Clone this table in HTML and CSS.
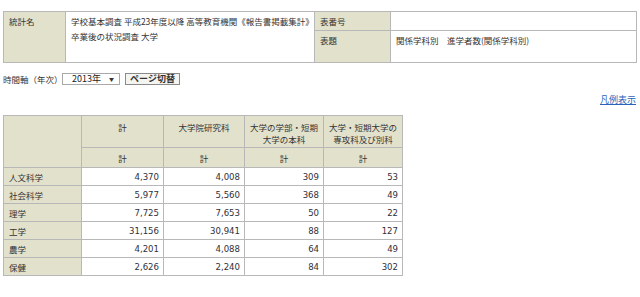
FILE: index.html
```html
<!DOCTYPE html>
<html lang="ja">
<head>
<meta charset="utf-8">
<title>統計表</title>
<link rel="stylesheet" href="styles.css">
</head>
<body>
<div class="page">
  <table class="info">
    <colgroup>
      <col class="c-lab1"><col class="c-val1"><col class="c-lab2"><col class="c-val2">
    </colgroup>
    <tr class="r1">
      <th rowspan="2">統計名</th>
      <td rowspan="2" class="nw">学校基本調査 平成23年度以降 高等教育機関《報告書掲載集計》<br>卒業後の状況調査 大学</td>
      <th>表番号</th>
      <td></td>
    </tr>
    <tr class="r2">
      <th>表題</th>
      <td>関係学科別　進学者数(関係学科別)</td>
    </tr>
  </table>

  <div class="axis">
    <span class="axis-label">時間軸（年次）</span>
    <span class="select-wrap">
      <select class="select"><option>2013年</option></select>
      <span class="arrow">▼</span>
    </span>
    <button class="btn" type="button">ページ切替</button>
  </div>

  <div class="legend"><a href="#">凡例表示</a></div>

  <table class="data">
    <colgroup>
      <col class="d0"><col class="d1"><col class="d2"><col class="d3"><col class="d4">
    </colgroup>
    <tr class="h1">
      <th rowspan="2" class="corner"></th>
      <th>計</th>
      <th>大学院研究科</th>
      <th>大学の学部・短期<br>大学の本科</th>
      <th>大学・短期大学の<br>専攻科及び別科</th>
    </tr>
    <tr class="h2">
      <th>計</th><th>計</th><th>計</th><th>計</th>
    </tr>
    <tr class="row"><th class="rl">人文科学</th><td>4,370</td><td>4,008</td><td>309</td><td>53</td></tr>
    <tr class="row"><th class="rl">社会科学</th><td>5,977</td><td>5,560</td><td>368</td><td>49</td></tr>
    <tr class="row"><th class="rl">理学</th><td>7,725</td><td>7,653</td><td>50</td><td>22</td></tr>
    <tr class="row"><th class="rl">工学</th><td>31,156</td><td>30,941</td><td>88</td><td>127</td></tr>
    <tr class="row"><th class="rl">農学</th><td>4,201</td><td>4,088</td><td>64</td><td>49</td></tr>
    <tr class="row"><th class="rl">保健</th><td>2,626</td><td>2,240</td><td>84</td><td>302</td></tr>
  </table>
</div>
</body>
</html>
```

FILE: styles.css
```css
html, body {
  margin: 0;
  padding: 0;
  background: #ffffff;
}
body {
  font-family: "Noto Sans CJK JP", sans-serif;
  font-size: 8.5px;
  color: #333333;
}
.page {
  padding: 11px 4px 0 3px;
  width: 633px;
}
table {
  border-collapse: collapse;
  table-layout: fixed;
}
.info {
  width: 633px;
}
.info th, .info td {
  border: 1px solid #b8b8b8;
  font-weight: normal;
  text-align: left;
  vertical-align: top;
  padding: 2px 5px 0 5px;
  line-height: 15px;
}
.info th {
  background: #e2e1cb;
}
.info td {
  background: #ffffff;
}
.info td.nw {
  white-space: nowrap;
  overflow: hidden;
  padding-right: 0;
}
.c-lab1 { width: 62px; }
.c-val1 { width: 249px; }
.c-lab2 { width: 76px; }
.c-val2 { width: 246px; }
.info .r1 { height: 19px; }
.info .r2 { height: 32px; }

.axis {
  display: flex;
  align-items: center;
  margin-top: 10px;
  height: 12px;
}
.axis-label {
  font-size: 8.5px;
  margin-right: 0;
  width: 59px;
}
.select-wrap {
  position: relative;
  display: inline-block;
}
.select {
  display: block;
  appearance: none;
  -webkit-appearance: none;
  width: 58px;
  height: 12px;
  border: 1px solid #a9a9a9;
  background: #ffffff;
  font-family: "Noto Sans CJK JP", sans-serif;
  font-size: 9px;
  color: #222;
  padding: 0 0 0 9px;
  margin: 0;
  line-height: 10px;
  border-radius: 0;
}
.arrow {
  position: absolute;
  right: 6px;
  top: 2px;
  font-size: 5px;
  line-height: 8px;
  color: #333;
  pointer-events: none;
}
.btn {
  margin-left: 5px;
  height: 12px;
  width: 55px;
  padding: 0;
  border: 1px solid #8a8a8a;
  background: #f4f4f0;
  font-family: "Noto Sans CJK JP", sans-serif;
  font-size: 9px;
  font-weight: bold;
  color: #333;
  line-height: 10px;
}

.legend {
  text-align: right;
  margin-top: 9px;
  height: 10px;
  line-height: 10px;
}
.legend a {
  color: #2a63b8;
  text-decoration: underline;
  font-size: 9px;
}

.data {
  margin-top: 11px;
  width: 399px;
}
.d0 { width: 78px; }
.d1 { width: 82px; }
.d2 { width: 81px; }
.d3 { width: 79px; }
.d4 { width: 79px; }
.data th, .data td {
  border: 1px solid #b8b8b8;
  padding: 0 4px;
  line-height: 12px;
}
.data th {
  background: #e2e1cb;
  font-weight: normal;
}
.data .h1 { height: 32px; }
.data .h1 th {
  vertical-align: top;
  text-align: center;
  line-height: 12px;
  padding-top: 5px;
}
.data .h2 { height: 20px; }
.data .h2 th {
  text-align: center;
  vertical-align: middle;
}
.data .row { height: 18px; }
.data th.rl {
  text-align: left;
  padding-left: 5px;
}
.data td {
  background: #ffffff;
  text-align: right;
  font-family: "DejaVu Sans Condensed", "DejaVu Sans", sans-serif;
  font-size: 9.5px;
  color: #2f2f3a;
}
```
